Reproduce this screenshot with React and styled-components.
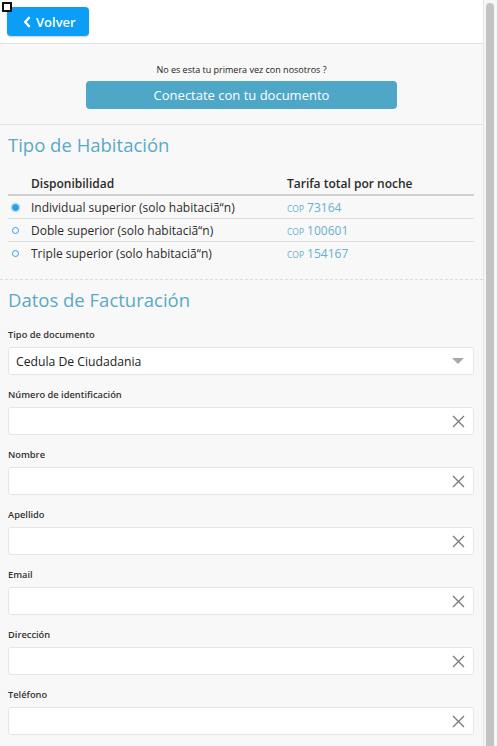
import styled, { createGlobalStyle } from 'styled-components'

const GlobalStyle = createGlobalStyle`
  html, body {
    margin: 0;
    padding: 0;
    overflow: hidden;
  }
  body {
    font-family: "Open Sans", "Noto Sans", "Liberation Sans", sans-serif;
    color: #333;
  }
  * {
    box-sizing: border-box;
  }
`

const Frame = styled.div`
  display: flex;
  height: 746px;
  position: relative;
`

const Page = styled.div`
  flex: 1;
  overflow: hidden;
  background: #f8f8f8;
`

const ScrollTrack = styled.div`
  width: 14px;
  background: #f6f6f6;
  border-left: 1px solid #e6e6e6;
  padding: 3px 3px 0 2px;
`

const ScrollThumb = styled.div`
  height: 100%;
  background: #c3c3c3;
  border-radius: 4px 4px 0 0;
`

const CornerMark = styled.div`
  position: absolute;
  top: 2px;
  left: 2px;
  width: 10px;
  height: 10px;
  border: 2px solid #111;
  background: #fff;
`

const TopBar = styled.div`
  background: #fff;
  height: 44px;
  border-bottom: 1px solid #e2e2e2;
  padding: 7px;
`

const BackButton = styled.button`
  display: flex;
  align-items: center;
  gap: 5px;
  width: 82px;
  height: 29px;
  padding: 0 0 0 16px;
  border: 0;
  border-radius: 4px;
  background: #0c9df7;
  box-shadow: 0 1px 2px rgba(0, 0, 0, 0.2);
  color: #fff;
  font-family: inherit;
  font-size: 13px;
  font-weight: 600;
`

const LoginBlock = styled.div`
  display: flex;
  flex-direction: column;
  align-items: center;
  padding: 19px 0 15px;
  border-bottom: 1px solid #e2e2e2;
`

const LoginHint = styled.div`
  font-size: 9px;
  line-height: 13px;
  color: #222;
  margin-bottom: 5px;
`

const DocButton = styled.button`
  width: 311px;
  height: 28px;
  border: 0;
  border-radius: 4px;
  background: #4fa7c7;
  color: #fff;
  font-family: inherit;
  font-size: 13px;
`

const Section = styled.div`
  padding: ${(p) => p.$top}px 9px 0 8px;
  border-top: ${(p) => (p.$dashed ? '1px dashed #dcdcdc' : 'none')};
`

const SectionTitle = styled.h2`
  margin: 0;
  font-size: 18.5px;
  line-height: 28px;
  font-weight: 400;
  color: #5aa8c8;
`

const Table = styled.div`
  margin: 14px 0 14px;
`

const Row = styled.div`
  display: grid;
  grid-template-columns: 23px 256px 1fr;
  align-items: center;
  height: 23px;
  border-bottom: ${(p) => (p.$head ? '2px solid #cfcfcf' : p.$last ? 'none' : '1px solid #dcdcdc')};
  font-size: 12px;
  font-weight: ${(p) => (p.$head ? 600 : 400)};
  color: #2b2b2b;
`

const Radio = styled.span`
  margin-left: 4px;
  width: 7px;
  height: 7px;
  border-radius: 50%;
  border: 1px solid #2c9de8;
  background: ${(p) => (p.$checked ? '#2c9de8' : '#fff')};
  box-shadow: ${(p) => (p.$checked ? '0 0 0 1.5px #bfe0f8' : 'none')};
`

const Price = styled.span`
  color: #68b0cd;
`

const Currency = styled.span`
  font-size: 8.5px;
  margin-right: 3px;
`

const Form = styled.div`
  display: flex;
  flex-direction: column;
  gap: 13px;
  padding-top: 14px;
`

const Field = styled.div`
  display: flex;
  flex-direction: column;
  gap: 5px;
`

const Label = styled.label`
  font-size: 9.3px;
  line-height: 14px;
  font-weight: 600;
  color: #333;
`

const InputBox = styled.div`
  display: flex;
  align-items: center;
  justify-content: space-between;
  height: 28px;
  padding: 0 8px 0 7px;
  background: #fff;
  border: 1px solid #e6e6e6;
  border-radius: 3px;
  font-size: 12.2px;
  color: #222;
`

const Caret = styled.span`
  width: 0;
  height: 0;
  margin-right: 1px;
  border-left: 6px solid transparent;
  border-right: 6px solid transparent;
  border-top: 6px solid #a9a9a9;
`

const ClearIcon = () => (
  <svg width="13" height="13" viewBox="0 0 13 13">
    <path d="M1 1 L12 12 M12 1 L1 12" stroke="#7a7a7a" strokeWidth="1.3" fill="none" />
  </svg>
)

const Chevron = () => (
  <svg width="8" height="12" viewBox="0 0 8 12">
    <path d="M6 1.8 L2.2 6 L6 10.2" stroke="#fff" strokeWidth="2.4" fill="none" strokeLinecap="round" strokeLinejoin="round" />
  </svg>
)

const rooms = [
  { name: 'Individual superior (solo habitaciã“n)', price: '73164', checked: true },
  { name: 'Doble superior (solo habitaciã“n)', price: '100601' },
  { name: 'Triple superior (solo habitaciã“n)', price: '154167' },
]

const fields = ['Número de identificación', 'Nombre', 'Apellido', 'Email', 'Dirección', 'Teléfono']

function App() {
  return (
    <>
      <GlobalStyle />
      <Frame>
        <CornerMark />
        <Page>
          <TopBar>
            <BackButton>
              <Chevron />
              Volver
            </BackButton>
          </TopBar>
          <LoginBlock>
            <LoginHint>No es esta tu primera vez con nosotros ?</LoginHint>
            <DocButton>Conectate con tu documento</DocButton>
          </LoginBlock>

          <Section $top={6}>
            <SectionTitle>Tipo de Habitación</SectionTitle>
            <Table>
              <Row $head>
                <span />
                <span>Disponibilidad</span>
                <span>Tarifa total por noche</span>
              </Row>
              {rooms.map((r, i) => (
                <Row key={r.name} $last={i === rooms.length - 1}>
                  <Radio $checked={r.checked} />
                  <span>{r.name}</span>
                  <Price>
                    <Currency>COP</Currency>
                    {r.price}
                  </Price>
                </Row>
              ))}
            </Table>
          </Section>

          <Section $top={6} $dashed>
            <SectionTitle>Datos de Facturación</SectionTitle>
            <Form>
              <Field>
                <Label>Tipo de documento</Label>
                <InputBox>
                  Cedula De Ciudadania
                  <Caret />
                </InputBox>
              </Field>
              {fields.map((f) => (
                <Field key={f}>
                  <Label>{f}</Label>
                  <InputBox>
                    <span />
                    <ClearIcon />
                  </InputBox>
                </Field>
              ))}
            </Form>
          </Section>
        </Page>
        <ScrollTrack>
          <ScrollThumb />
        </ScrollTrack>
      </Frame>
    </>
  )
}

export default App
